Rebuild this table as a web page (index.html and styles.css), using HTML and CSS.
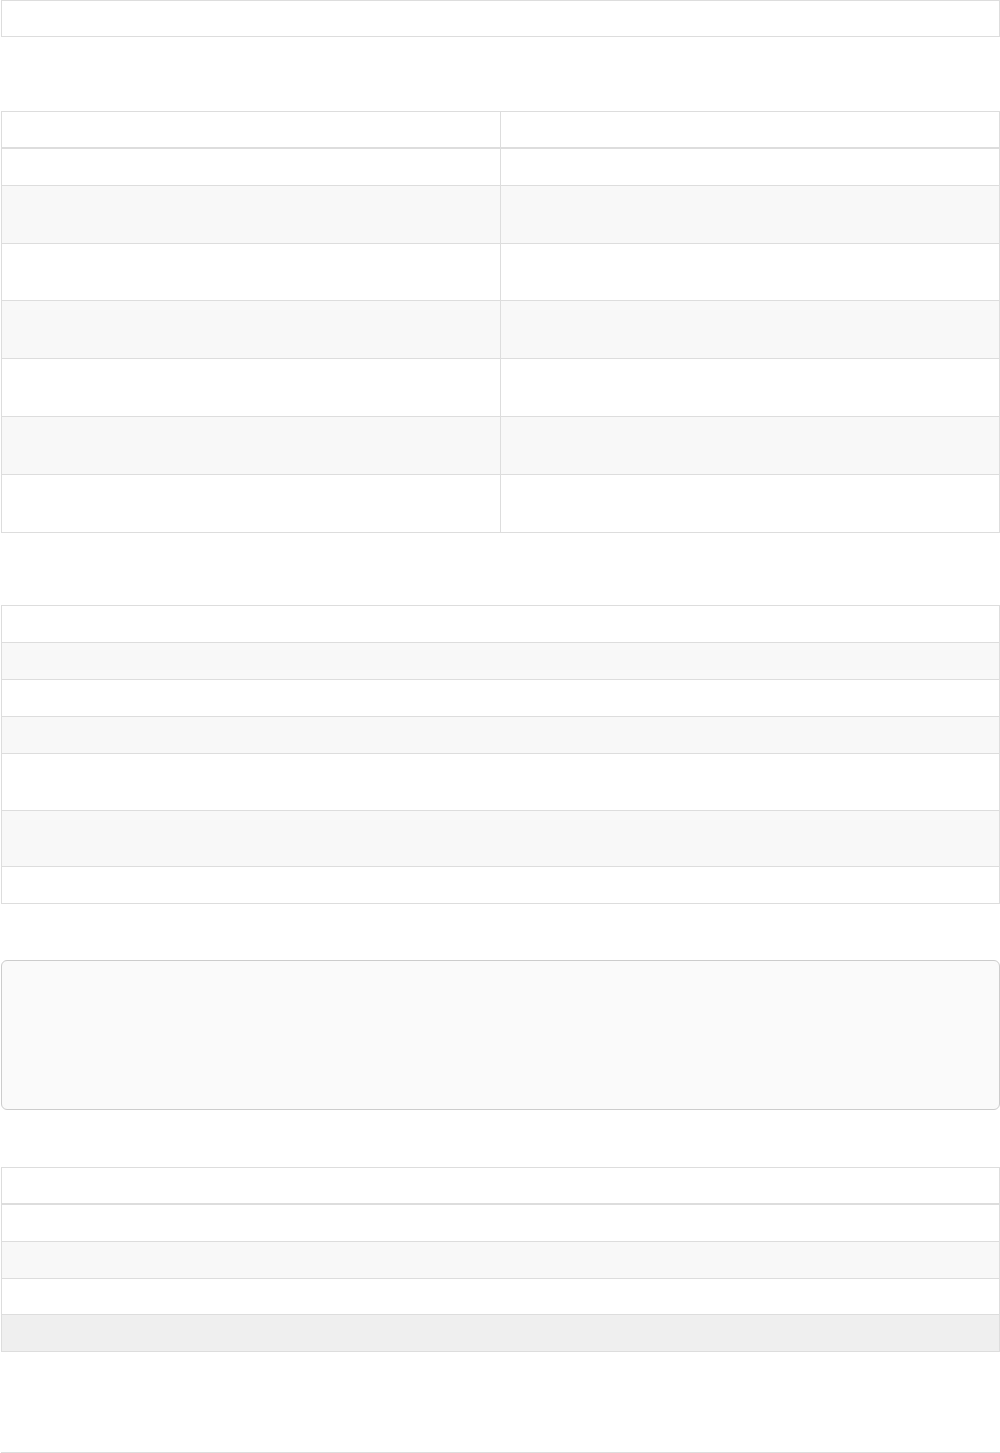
FILE: index.html
```html
<!DOCTYPE html>
<html>
<head>
<meta charset="utf-8">
<link rel="stylesheet" href="styles.css">
</head>
<body>
<div class="page">
  <div class="tbl">
    <div class="tr h35"><div class="td"></div></div>
  </div>

  <div class="tbl gap74">
    <div class="tr thead h35"><div class="td"></div><div class="td"></div></div>
    <div class="tbody">
      <div class="tr h36"><div class="td"></div><div class="td"></div></div>
      <div class="tr h57 alt"><div class="td"></div><div class="td"></div></div>
      <div class="tr h56"><div class="td"></div><div class="td"></div></div>
      <div class="tr h57 alt"><div class="td"></div><div class="td"></div></div>
      <div class="tr h57"><div class="td"></div><div class="td"></div></div>
      <div class="tr h57 alt"><div class="td"></div><div class="td"></div></div>
      <div class="tr h57"><div class="td"></div><div class="td"></div></div>
    </div>
  </div>

  <div class="tbl gap72">
    <div class="tbody">
      <div class="tr h36"><div class="td"></div></div>
      <div class="tr h36 alt"><div class="td"></div></div>
      <div class="tr h36"><div class="td"></div></div>
      <div class="tr h36 alt"><div class="td"></div></div>
      <div class="tr h56"><div class="td"></div></div>
      <div class="tr h55 alt"><div class="td"></div></div>
      <div class="tr h36"><div class="td"></div></div>
    </div>
  </div>

  <div class="code"></div>

  <div class="tbl gap57">
    <div class="tr thead h35"><div class="td"></div></div>
    <div class="tbody">
      <div class="tr h36"><div class="td"></div></div>
      <div class="tr h36 alt"><div class="td"></div></div>
      <div class="tr h35"><div class="td"></div></div>
      <div class="tr h36 active"><div class="td"></div></div>
    </div>
  </div>

  <div class="rule"></div>
</div>
</body>
</html>
```

FILE: styles.css
```css
html, body {
  margin: 0;
  padding: 0;
  background: #ffffff;
  font-family: "Liberation Sans", Arial, sans-serif;
}

.page {
  width: 999px;
  margin-left: 1px;
}

.tbl {
  border: 1px solid #dddddd;
  display: flex;
  flex-direction: column;
}

.gap74 { margin-top: 74px; }
.gap72 { margin-top: 72px; }
.gap57 { margin-top: 57px; }

.tr {
  display: flex;
}

.tbody {
  display: flex;
  flex-direction: column;
}

.tbody .tr + .tr {
  border-top: 1px solid #dddddd;
}

.thead {
  border-bottom: 2px solid #dddddd;
}

.td {
  flex: 1 1 0;
}

.td + .td {
  border-left: 1px solid #dddddd;
}

.h35 { height: 35px; }
.h36 { height: 36px; }
.h55 { height: 55px; }
.h56 { height: 56px; }
.h57 { height: 57px; }

.alt { background: #f8f8f8; }
.active { background: #efefef; }

.code {
  margin-top: 56px;
  height: 148px;
  border: 1px solid #cccccc;
  border-radius: 6px;
  background: #fafafa;
}

.rule {
  margin-top: 100px;
  border-top: 1px solid #dddddd;
  height: 1px;
}
```
